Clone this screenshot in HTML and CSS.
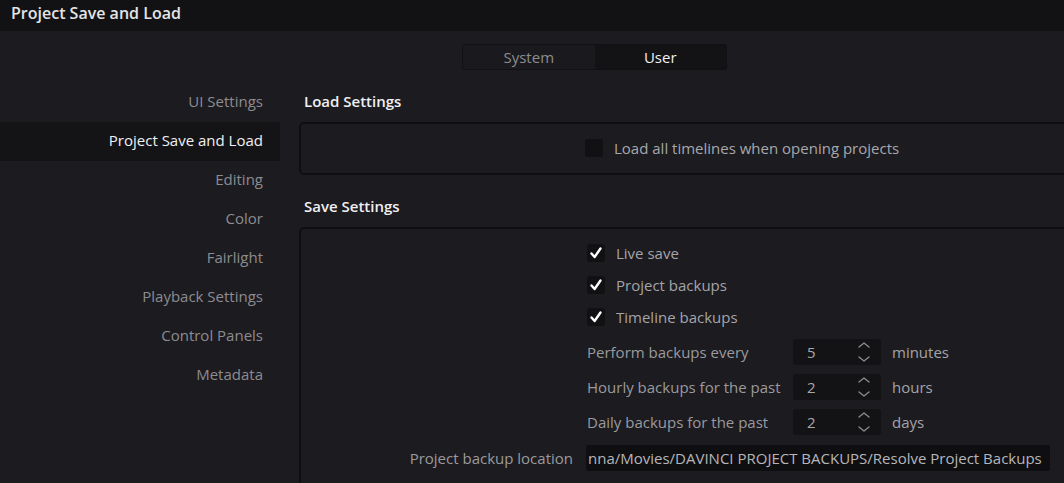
FILE: index.html
```html
<!DOCTYPE html>
<html>
<head>
<meta charset="utf-8">
<link rel="stylesheet" href="styles.css">
</head>
<body>
<div class="titlebar">Project Save and Load</div>
<div class="tabs-row">
  <div class="tabs">
    <div class="tab">System</div>
    <div class="tab active">User</div>
  </div>
</div>
<div class="main">
  <nav class="sidebar">
    <div class="nav-item">UI Settings</div>
    <div class="nav-item selected">Project Save and Load</div>
    <div class="nav-item">Editing</div>
    <div class="nav-item">Color</div>
    <div class="nav-item">Fairlight</div>
    <div class="nav-item">Playback Settings</div>
    <div class="nav-item">Control Panels</div>
    <div class="nav-item">Metadata</div>
  </nav>
  <section class="content">
    <h2 class="heading">Load Settings</h2>
    <div class="panel load-panel">
      <div class="row">
        <div class="label-col"></div>
        <div class="check-row">
          <span class="checkbox"></span>
          <span class="check-label">Load all timelines when opening projects</span>
        </div>
      </div>
    </div>
    <h2 class="heading second">Save Settings</h2>
    <div class="panel save-panel">
      <div class="row check">
        <div class="label-col"></div>
        <div class="check-row">
          <span class="checkbox checked"><svg viewBox="0 0 18 18" width="18" height="18"><path d="M4.5 9.5 L7.6 13 L13.5 4.5" fill="none" stroke="#fff" stroke-width="2.4" stroke-linecap="round" stroke-linejoin="round"/></svg></span>
          <span class="check-label">Live save</span>
        </div>
      </div>
      <div class="row check">
        <div class="label-col"></div>
        <div class="check-row">
          <span class="checkbox checked"><svg viewBox="0 0 18 18" width="18" height="18"><path d="M4.5 9.5 L7.6 13 L13.5 4.5" fill="none" stroke="#fff" stroke-width="2.4" stroke-linecap="round" stroke-linejoin="round"/></svg></span>
          <span class="check-label">Project backups</span>
        </div>
      </div>
      <div class="row check">
        <div class="label-col"></div>
        <div class="check-row">
          <span class="checkbox checked"><svg viewBox="0 0 18 18" width="18" height="18"><path d="M4.5 9.5 L7.6 13 L13.5 4.5" fill="none" stroke="#fff" stroke-width="2.4" stroke-linecap="round" stroke-linejoin="round"/></svg></span>
          <span class="check-label">Timeline backups</span>
        </div>
      </div>
      <div class="row spin first-spin">
        <div class="label-col"></div>
        <div class="spin-row">
          <span class="spin-label">Perform backups every</span>
          <span class="spinner"><span class="spin-value">5</span><svg class="chev" viewBox="0 0 14 22" width="14" height="22"><path d="M2 6 L7 2 L12 6 M2 16 L7 20 L12 16" fill="none" stroke="#8a8a8e" stroke-width="1.4" stroke-linecap="round" stroke-linejoin="round"/></svg></span>
          <span class="unit">minutes</span>
        </div>
      </div>
      <div class="row spin">
        <div class="label-col"></div>
        <div class="spin-row">
          <span class="spin-label">Hourly backups for the past</span>
          <span class="spinner"><span class="spin-value">2</span><svg class="chev" viewBox="0 0 14 22" width="14" height="22"><path d="M2 6 L7 2 L12 6 M2 16 L7 20 L12 16" fill="none" stroke="#8a8a8e" stroke-width="1.4" stroke-linecap="round" stroke-linejoin="round"/></svg></span>
          <span class="unit">hours</span>
        </div>
      </div>
      <div class="row spin">
        <div class="label-col"></div>
        <div class="spin-row">
          <span class="spin-label">Daily backups for the past</span>
          <span class="spinner"><span class="spin-value">2</span><svg class="chev" viewBox="0 0 14 22" width="14" height="22"><path d="M2 6 L7 2 L12 6 M2 16 L7 20 L12 16" fill="none" stroke="#8a8a8e" stroke-width="1.4" stroke-linecap="round" stroke-linejoin="round"/></svg></span>
          <span class="unit">days</span>
        </div>
      </div>
      <div class="row location">
        <div class="label-col loc-label">Project backup location</div>
        <div class="text-field">nna/Movies/DAVINCI PROJECT BACKUPS/Resolve Project Backups</div>
      </div>
    </div>
  </section>
</div>
</body>
</html>
```

FILE: styles.css
```css
* { box-sizing: border-box; }
html, body {
  margin: 0;
  padding: 0;
  background: #1c1b20;
  overflow: hidden;
  width: 1064px;
  height: 483px;
}
body {
  font-family: "Open Sans", "Noto Sans", sans-serif;
  font-size: 15px;
  color: #9a9a9e;
}
.titlebar {
  height: 31px;
  background: #121214;
  color: #e4e4e6;
  font-size: 16px;
  font-weight: 600;
  line-height: 27px;
  padding-left: 11px;
}
.tabs-row {
  padding-top: 13px;
  padding-left: 462px;
}
.tabs {
  display: flex;
  width: 265px;
  height: 26px;
  border: 1px solid #111113;
  border-radius: 2px;
  overflow: hidden;
}
.tab {
  flex: 1;
  text-align: center;
  line-height: 24px;
  color: #8c8c90;
  background: #1a1a1e;
  font-size: 15px;
}
.tab.active {
  background: #131315;
  color: #f0f0f2;
}
.main {
  display: grid;
  grid-template-columns: 280px 1fr;
  margin-top: 13px;
}
.sidebar {
  display: flex;
  flex-direction: column;
}
.nav-item {
  height: 39px;
  line-height: 37px;
  text-align: right;
  padding-right: 17px;
  color: #8c8c90;
}
.nav-item.selected {
  background: #141417;
  color: #f0f0f2;
}
.content {
  padding-left: 19px;
  margin-right: -20px;
}
.heading {
  margin: 0;
  height: 39px;
  line-height: 37px;
  font-size: 15px;
  font-weight: 600;
  color: #f0f0f2;
  padding-left: 5px;
}
.heading.second {
  margin-top: 13px;
}
.panel {
  border: 2px solid #0f0f11;
  border-radius: 5px;
}
.load-panel {
  height: 53px;
  padding-top: 14px;
}
.save-panel {
  padding-top: 8px;
  height: 256px;
  border-bottom: none;
  border-bottom-left-radius: 0;
  border-bottom-right-radius: 0;
  overflow: hidden;
}
.row {
  display: flex;
  align-items: center;
}
.label-col {
  width: 272px;
  margin-right: 13px;
  flex-shrink: 0;
  text-align: right;
}
.load-panel .label-col { width: 271px; }
.check-row {
  display: flex;
  align-items: center;
}
.row.check {
  height: 32px;
}
.checkbox {
  width: 18px;
  height: 18px;
  background: #111113;
  border-radius: 3px;
  display: inline-block;
  margin-left: 1px;
}
.load-panel .checkbox { margin-left: 0; }
.checkbox svg { display: block; }
.check-label {
  margin-left: 11px;
  color: #a4a4a8;
}
.load-panel .check-label { color: #a8a8ac; }
.row.spin {
  height: 35px;
}
.row.first-spin {
  margin-top: 1px;
}
.spin-row {
  display: flex;
  align-items: center;
  padding-left: 1px;
}
.spin-label {
  width: 206px;
  color: #9a9a9e;
}
.spinner {
  width: 88px;
  height: 26px;
  background: #131315;
  border-radius: 3px;
  display: flex;
  align-items: center;
  padding-left: 14px;
  padding-right: 10px;
  justify-content: space-between;
}
.spin-value {
  color: #a8a8ac;
}
.chev { display: block; }
.unit {
  margin-left: 11px;
  color: #a4a4a8;
}
.row.location {
  height: 37px;
}
.loc-label {
  color: #9a9a9e;
}
.text-field {
  width: 464px;
  height: 26px;
  background: #0f0f11;
  color: #b6b6ba;
  line-height: 26px;
  padding-left: 2px;
  white-space: nowrap;
  overflow: hidden;
  border-radius: 2px;
}
```
